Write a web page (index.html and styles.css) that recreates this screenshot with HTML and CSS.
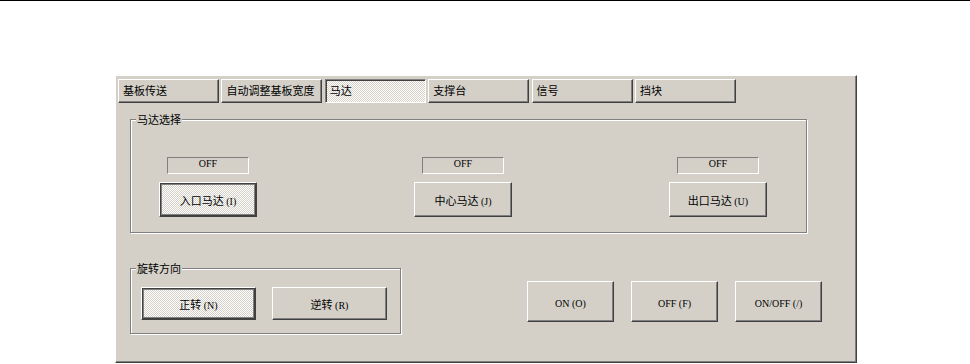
FILE: index.html
```html
<!DOCTYPE html>
<html>
<head>
    <link rel="stylesheet" href="styles.css">
</head>
<body>
    <div class="dialog">
        <div class="tabs">
            <div class="tab">基板传送</div>
            <div class="tab">自动调整基板宽度</div>
            <div class="tab active">马达</div>
            <div class="tab">支撑台</div>
            <div class="tab">信号</div>
            <div class="tab">挡块</div>
        </div>

        <div class="page">
            <!-- motor select -->
            <div class="group motors">
                <span class="legend">马达选择</span>
                <div class="motor-row">
                    <div class="motor">
                        <div class="status">OFF</div>
                        <button class="btn pushed">入口马达 <span class="key">(I)</span></button>
                    </div>
                    <div class="motor">
                        <div class="status">OFF</div>
                        <button class="btn">中心马达 <span class="key">(J)</span></button>
                    </div>
                    <div class="motor">
                        <div class="status">OFF</div>
                        <button class="btn">出口马达 <span class="key">(U)</span></button>
                    </div>
                </div>
            </div>

            <div class="lower">
                <!-- rotation -->
                <div class="group direction">
                    <span class="legend">旋转方向</span>
                    <button class="btn pushed">正转 <span class="key">(N)</span></button>
                    <button class="btn">逆转 <span class="key">(R)</span></button>
                </div>

                <div class="actions">
                    <button class="btn"><span class="key">ON (O)</span></button>
                    <button class="btn"><span class="key">OFF (F)</span></button>
                    <button class="btn"><span class="key">ON/OFF (/)</span></button>
                </div>
            </div>
        </div>
    </div>
</body>
</html>
```

FILE: styles.css
```css
body {
    margin: 0;
    background-color: #fff;
    border-top: 1px solid #000;
    font-family: "Noto Sans CJK SC", "DejaVu Sans", sans-serif;
    font-size: 11px;
    color: #000;
}

.dialog {
    margin: 74px 0 0 115px;
    width: 742px;
    height: 288px;
    box-sizing: border-box;
    background-color: #d4d0c8;
    border: 1px solid;
    border-color: #fff #404040 #404040 #fff;
    box-shadow: inset -1px -1px 0 #808080;
}

.tabs {
    display: flex;
    gap: 2.4px;
    padding: 3px 0 0 2px;
}

.tab {
    width: 101px;
    height: 24px;
    box-sizing: border-box;
    padding-left: 4px;
    line-height: 21px;
    white-space: nowrap;
    overflow: hidden;
    border: 1px solid;
    border-color: #fff #404040 #404040 #fff;
    box-shadow: inset -1px -1px 0 #808080;
}

.tab.active {
    border-color: #808080 #fff #fff #808080;
    box-shadow: inset 1px 1px 0 #404040;
    background: repeating-conic-gradient(#fff 0 25%, #d4d0c8 0 50%) 0 0 / 2px 2px;
}

.page {
    padding-left: 14px;
    margin-top: 16px;
}

.group {
    position: relative;
    box-sizing: border-box;
    border: 1px solid #808080;
    box-shadow: 1px 1px 0 #fff, inset 1px 1px 0 #fff;
}

.legend {
    position: absolute;
    top: -9px;
    left: 5px;
    padding: 0 1px;
    line-height: 16px;
    background-color: #d4d0c8;
}

.motors {
    width: 677px;
    height: 114px;
}

.motor-row {
    display: flex;
    gap: 157px;
    padding: 37px 0 0 28px;
}

.motor {
    width: 98px;
    display: flex;
    flex-direction: column;
    align-items: center;
    gap: 8px;
}

.status {
    width: 82px;
    height: 17px;
    box-sizing: border-box;
    border: 1px solid;
    border-color: #808080 #fff #fff #808080;
    text-align: center;
    font-family: "Liberation Serif", serif;
    font-size: 10px;
    line-height: 12px;
}

.btn {
    padding: 0;
    background-color: #d4d0c8;
    border: 1px solid;
    border-color: #fff #404040 #404040 #fff;
    box-shadow: inset -1px -1px 0 #808080;
    font-family: "Noto Sans CJK SC", "DejaVu Sans", sans-serif;
    font-size: 11px;
    color: #000;
    box-sizing: border-box;
}

.btn.pushed {
    background: repeating-conic-gradient(#fff 0 25%, #d4d0c8 0 50%) 0 0 / 2px 2px;
    box-shadow: inset 0 0 0 1px #404040, inset 0 0 0 2px #808080;
}

.key {
    font-family: "Liberation Serif", serif;
    font-size: 10px;
}

.motor .btn {
    width: 98px;
    height: 35px;
}

.lower {
    display: flex;
    align-items: flex-start;
    margin-top: 35px;
}

.direction {
    width: 271px;
    height: 66px;
    display: flex;
    align-items: flex-start;
    gap: 16px;
    padding: 18px 0 0 10px;
}

.direction .btn {
    width: 115px;
    height: 33px;
}

.actions {
    display: flex;
    gap: 17px;
    margin: 13px 0 0 126px;
}

.actions .btn {
    width: 87px;
    height: 41px;
}
```
